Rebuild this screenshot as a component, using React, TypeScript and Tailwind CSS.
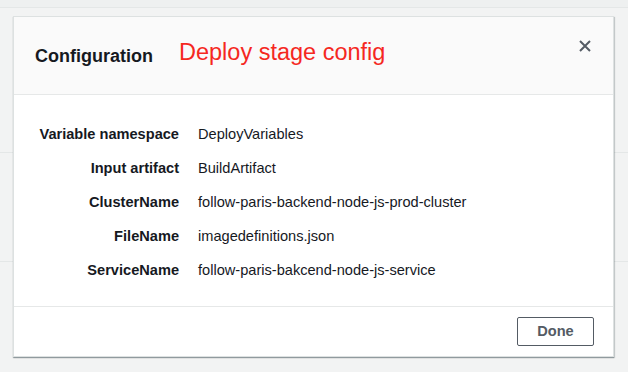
import React from 'react';

const rows: { label: string; value: string }[] = [
  { label: 'Variable namespace', value: 'DeployVariables' },
  { label: 'Input artifact', value: 'BuildArtifact' },
  { label: 'ClusterName', value: 'follow-paris-backend-node-js-prod-cluster' },
  { label: 'FileName', value: 'imagedefinitions.json' },
  { label: 'ServiceName', value: 'follow-paris-bakcend-node-js-service' },
];

export default function App() {
  return (
    <div
      className="relative w-[628px] h-[372px] overflow-hidden bg-[#f2f3f3]"
      style={{ fontFamily: '"Liberation Sans", Arial, sans-serif' }}
    >
      {/* page behind the modal */}
      <div className="h-[8px] bg-[#eef0f0] border-b border-[#e4e7e7]" />
      <div className="mt-[144px] h-[110px] border-t border-b border-[#e4e7e7]" />

      {/* modal */}
      <div className="absolute left-[13px] top-[16px] w-[601px] h-[341px] flex flex-col bg-white border border-[#dde1e1] shadow-[0_1px_1px_0_rgba(0,28,36,0.3),1px_1px_1px_0_rgba(0,28,36,0.15)]">
        {/* header */}
        <div className="h-[78px] shrink-0 bg-[#fafafa] border-b border-[#e6e8e8] flex items-start relative">
          <h2 className="ml-[21px] mt-[27px] text-[18px] font-bold text-[#16191f] leading-[24px]">Configuration</h2>
          <span className="ml-[26px] mt-[20px] text-[23.5px] text-[#f5281f] leading-[30px]">Deploy stage config</span>
          <button className="absolute right-[22px] top-[23px] text-[#545b64]" aria-label="Close">
            <svg width="12" height="12" viewBox="0 0 12 12" fill="none" stroke="currentColor" strokeWidth="2">
              <path d="M1 1l10 10M11 1L1 11" />
            </svg>
          </button>
        </div>

        {/* body */}
        <div className="flex-1 pt-[30px]">
          <div className="flex flex-col gap-[14px]">
            {rows.map(r => (
              <div key={r.label} className="flex items-center h-[20px] text-[14.6px]">
                <div className="w-[165px] text-right font-bold text-[#16191f]">{r.label}</div>
                <div className="ml-[19px] text-[#16191f]">{r.value}</div>
              </div>
            ))}
          </div>
        </div>

        {/* footer */}
        <div className="h-[50px] shrink-0 border-t border-[#e6e8e8] flex items-center justify-end pr-[19px]">
          <button className="w-[77px] h-[29px] rounded-[2px] border border-[#545b64] text-[14.6px] font-bold text-[#545b64]">
            Done
          </button>
        </div>
      </div>
    </div>
  );
}
